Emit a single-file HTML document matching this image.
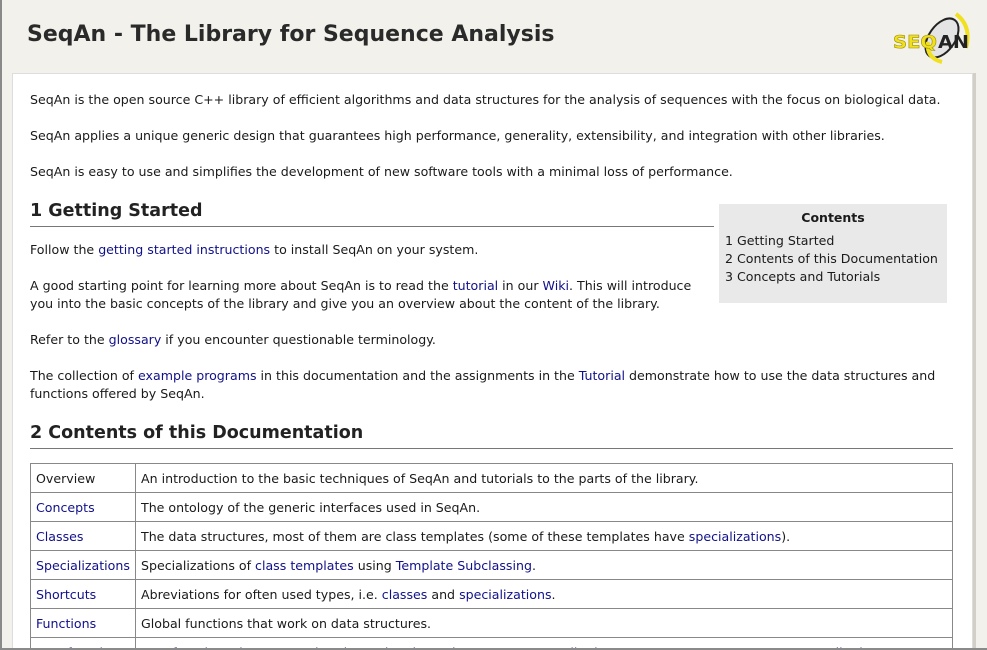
<!DOCTYPE html>
<html style="overflow:hidden;height:650px"><head><meta charset="utf-8"><style>
*{margin:0;padding:0;box-sizing:border-box}
html,body{overflow:hidden}
body{width:987px;height:650px;background:#f2f1ec;font-family:"DejaVu Sans","Liberation Sans",sans-serif;color:#1a1a1a;position:relative;font-size:12.6px}
.lb{position:absolute;left:0;top:0;width:2px;height:650px;background:#8a8a8a}
.bb{position:absolute;left:0;top:648px;width:987px;height:2px;background:#8a8a8a}
h1{position:absolute;left:27px;top:22px;font-size:22px;font-weight:bold;color:#2a2a2a;white-space:nowrap}
.panel{position:absolute;left:12px;top:73px;width:961px;height:577px;background:#fff;border:1px solid #ddd;box-shadow:3px 0 0 #d2d0c6}
.t{position:absolute;white-space:nowrap;line-height:18px}
a{color:#10108a;text-decoration:none}
.h2{position:absolute;font-size:17.5px;font-weight:bold;color:#222;white-space:nowrap;border-bottom:1px solid #777}
.toc{position:absolute;left:719px;top:204px;width:228px;height:99px;background:#e9e9e9;padding:6px 6px}
.toc b{display:block;text-align:center;margin-bottom:7px;font-size:12.5px}
.toc div{line-height:18px}
table{position:absolute;left:30px;top:463px;width:923px;border-collapse:collapse}
td{border:1px solid #888;height:29px;padding:0 5px;white-space:nowrap;vertical-align:middle}
td:first-child{width:105px}
</style></head><body>
<h1>SeqAn - The Library for Sequence Analysis</h1>
<svg style="position:absolute;left:890px;top:8px" width="82" height="56" viewBox="0 0 82 56">
<ellipse cx="52" cy="30" rx="13" ry="22" transform="rotate(35 52 30)" fill="#e4e4e4" stroke="#222" stroke-width="2"/>
<path d="M66 6 Q82 18 76 40" stroke="#f0e020" stroke-width="4" fill="none"/>
<path d="M38 34 Q36 50 52 54" stroke="#f0e020" stroke-width="4" fill="none"/>
<text x="3" y="40" font-family="DejaVu Sans" font-weight="bold" font-size="18" fill="#f0e020" stroke="#a09000" stroke-width="0.6" textLength="44" lengthAdjust="spacingAndGlyphs">SEQ</text>
<text x="48" y="40" font-family="DejaVu Sans" font-weight="bold" font-size="18" fill="#222" textLength="31" lengthAdjust="spacingAndGlyphs">AN</text>
</svg>
<div class="panel"></div>
<div class="t" style="left:30px;top:91px">SeqAn is the open source C++ library of efficient algorithms and data structures for the analysis of sequences with the focus on biological data.</div>
<div class="t" style="left:30px;top:127px">SeqAn applies a unique generic design that guarantees high performance, generality, extensibility, and integration with other libraries.</div>
<div class="t" style="left:30px;top:163px">SeqAn is easy to use and simplifies the development of new software tools with a minimal loss of performance.</div>
<div class="h2" style="left:30px;top:201px;width:684px;height:26px">1 Getting Started</div>
<div class="toc"><b>Contents</b><div>1 Getting Started</div><div>2 Contents of this Documentation</div><div>3 Concepts and Tutorials</div></div>
<div class="t" style="left:30px;top:241px">Follow the <a>getting started instructions</a> to install SeqAn on your system.</div>
<div class="t" style="left:30px;top:277px">A good starting point for learning more about SeqAn is to read the <a>tutorial</a> in our <a>Wiki</a>. This will introduce<br>you into the basic concepts of the library and give you an overview about the content of the library.</div>
<div class="t" style="left:30px;top:331px">Refer to the <a>glossary</a> if you encounter questionable terminology.</div>
<div class="t" style="left:30px;top:367px">The collection of <a>example programs</a> in this documentation and the assignments in the <a>Tutorial</a> demonstrate how to use the data structures and<br>functions offered by SeqAn.</div>
<div class="h2" style="left:30px;top:423px;width:923px;height:26px">2 Contents of this Documentation</div>
<table>
<tr><td>Overview</td><td>An introduction to the basic techniques of SeqAn and tutorials to the parts of the library.</td></tr>
<tr><td><a>Concepts</a></td><td>The ontology of the generic interfaces used in SeqAn.</td></tr>
<tr><td><a>Classes</a></td><td>The data structures, most of them are class templates (some of these templates have <a>specializations</a>).</td></tr>
<tr><td><a>Specializations</a></td><td>Specializations of <a>class templates</a> using <a>Template Subclassing</a>.</td></tr>
<tr><td><a>Shortcuts</a></td><td>Abreviations for often used types, i.e. <a>classes</a> and <a>specializations</a>.</td></tr>
<tr><td><a>Functions</a></td><td>Global functions that work on data structures.</td></tr>
<tr><td><a>Metafunctions</a></td><td><a>Metafunctions that are used to determine dependent types at compile time, or to compute constants at compile time</a></td></tr>
</table>
<div class="lb"></div><div class="bb"></div>
</body></html>
